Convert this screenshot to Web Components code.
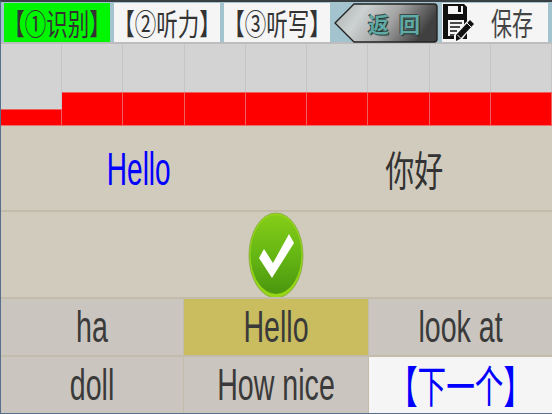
<!DOCTYPE html>
<html lang="zh">
<head>
<meta charset="utf-8">
<title>识别</title>
<style>
  html, body { margin: 0; padding: 0; }
  body { width: 552px; height: 414px; overflow: hidden; font-family: "Liberation Sans", "Noto Sans CJK SC", sans-serif; }
</style>
</head>
<body>
<quiz-app>
  <top-bar slot="top">
    <tab-button active>【①识别】</tab-button>
    <tab-button>【②听力】</tab-button>
    <tab-button>【③听写】</tab-button>
    <back-button></back-button>
    <save-button></save-button>
  </top-bar>
  <score-bars slot="bars"></score-bars>
  <word-row slot="word"></word-row>
  <result-row slot="result"></result-row>
  <choice-grid slot="choices">
    <choice-button>ha</choice-button>
    <choice-button state="correct">Hello</choice-button>
    <choice-button>look at</choice-button>
    <choice-button>doll</choice-button>
    <choice-button>How nice</choice-button>
    <choice-button state="next">【下一个】</choice-button>
  </choice-grid>
</quiz-app>

<script>
// the app was stretched to fit the screen, so all text is tall and narrow: scaleY on a narrow font size
class QuizApp extends HTMLElement {
    constructor() {
        super();
        this.attachShadow({ mode: 'open' });
        this.shadowRoot.innerHTML = `
            <style>
                :host {
                    display: flex;
                    flex-direction: column;
                    width: 552px;
                    height: 414px;
                    box-sizing: border-box;
                    background: #d1cbbd;
                    border-left: 1px solid #56708c;
                    border-top: 2px solid #3a3f44;
                    border-bottom: 1px solid #56708c;
                }
            </style>
            <slot name="top"></slot>
            <slot name="bars"></slot>
            <slot name="word"></slot>
            <slot name="result"></slot>
            <slot name="choices"></slot>
        `;
    }
}

class TopBar extends HTMLElement {
    constructor() {
        super();
        this.attachShadow({ mode: 'open' });
        this.shadowRoot.innerHTML = `
            <style>
                :host {
                    display: flex;
                    gap: 4px;
                    height: 42px;
                    box-sizing: border-box;
                    padding: 1px 4px 0 3px;
                    background: #a3c3cf;
                    border-bottom: 2px solid #bdbdbd;
                }
            </style>
            <slot></slot>
        `;
    }
}

class TabButton extends HTMLElement {
    constructor() {
        super();
        this.attachShadow({ mode: 'open' });
        this.shadowRoot.innerHTML = `
            <style>
                :host {
                    flex: 0 0 106px;
                    min-width: 0;
                    display: flex;
                    align-items: center;
                    justify-content: center;
                    background: #f5f5f5;
                    color: #333;
                    font-family: "Noto Sans CJK SC", sans-serif;
                    font-size: 21.5px;
                    line-height: 1;
                }
                :host([active]) { background: #00f500; }
                span {
                    display: inline-block;
                    white-space: nowrap;
                    transform: scaleY(1.36);
                }
            </style>
            <span><slot></slot></span>
        `;
    }
}

class BackButton extends HTMLElement {
    constructor() {
        super();
        this.attachShadow({ mode: 'open' });
        this.shadowRoot.innerHTML = `
            <style>
                :host {
                    flex: 0 0 104px;
                    min-width: 0;
                    position: relative;
                    display: flex;
                    align-items: center;
                    justify-content: center;
                    padding-left: 16px;
                    box-sizing: border-box;
                }
                svg { position: absolute; left: 0; top: 0; }
                span {
                    position: relative;
                    font-family: "Noto Sans CJK SC", sans-serif;
                    font-weight: 700;
                    font-size: 21px;
                    color: #62aaa6;
                    letter-spacing: 10px;
                    margin-right: -10px;
                    text-shadow: 1px 1px 1px #14302e, -1px -1px 0 #3a4a4a;
                    white-space: nowrap;
                }
            </style>
            <svg width="104" height="40" viewBox="0 0 104 40">
                <defs>
                    <linearGradient id="metal" x1="0" y1="0" x2="1" y2="0.25">
                        <stop offset="0" stop-color="#a9b1b2"/>
                        <stop offset="0.3" stop-color="#cdd1d1"/>
                        <stop offset="0.62" stop-color="#a4a4a4"/>
                        <stop offset="1" stop-color="#404040"/>
                    </linearGradient>
                </defs>
                <path d="M1 20 L20 1 H100 Q103 1 103 4 V36 Q103 39 100 39 H20 Z" fill="url(#metal)" stroke="#222" stroke-width="1.4" stroke-linejoin="round"/>
            </svg>
            <span>返回</span>
        `;
    }
}

class SaveButton extends HTMLElement {
    constructor() {
        super();
        this.attachShadow({ mode: 'open' });
        this.shadowRoot.innerHTML = `
            <style>
                :host {
                    flex: 1;
                    min-width: 0;
                    display: flex;
                    align-items: center;
                    background: #f5f5f5;
                    color: #444;
                    font-family: "Noto Sans CJK SC", sans-serif;
                    font-size: 21px;
                    line-height: 1;
                }
                svg { flex: none; margin-left: 1px; }
                span {
                    display: inline-block;
                    white-space: nowrap;
                    margin: 0 0 1px 16px;
                    transform: scaleY(1.44);
                }
            </style>
            <svg width="32" height="39" viewBox="0 0 32 39">
                <path d="M0 1 H21 L24 4 V36 H0 Z" fill="#111"/>
                <rect x="5" y="3" width="15" height="8" fill="#f5f5f5"/>
                <rect x="15" y="3" width="3" height="6" fill="#111"/>
                <rect x="5" y="17" width="16" height="16" fill="#f5f5f5"/>
                <path d="M7 20 H19 M7 24 H17 M7 28 H14 M7 32 H12" stroke="#111" stroke-width="1.6"/>
                <path d="M27 15 L32 20 L17 39 H11 V32 Z" fill="#f5f5f5"/>
                <path d="M27 17 L31 21 L17 36 L13 38 L13 32 Z" fill="#111"/>
                <path d="M24 20 L28 24 M14.5 32 L17.5 35" stroke="#f5f5f5" stroke-width="1"/>
            </svg>
            <span>保存</span>
        `;
    }
}

class ScoreBars extends HTMLElement {
    constructor() {
        super();
        this.attachShadow({ mode: 'open' });
        const heights = [17, 34, 34, 34, 34, 34, 34, 34, 34];
        const cols = heights.map(h => `<div class="col"><div class="bar" style="height:${h}px"></div></div>`).join('');
        this.shadowRoot.innerHTML = `
            <style>
                :host {
                    display: grid;
                    grid-template-columns: repeat(9, 1fr);
                    height: 82px;
                    flex: none;
                    background: #d3d3d3;
                }
                .col {
                    display: flex;
                    flex-direction: column;
                    justify-content: flex-end;
                    border-right: 1px solid #c6c6c6;
                }
                .bar {
                    box-sizing: border-box;
                    margin-right: -1px;
                    background: #ff0000;
                    border-top: 1px solid #ee6060;
                    border-right: 1px solid #ee6060;
                    border-bottom: 1px solid #e87070;
                }
            </style>
            ${cols}
        `;
    }
}

class WordRow extends HTMLElement {
    constructor() {
        super();
        this.attachShadow({ mode: 'open' });
        this.shadowRoot.innerHTML = `
            <style>
                :host {
                    display: grid;
                    grid-template-columns: 1fr 1fr;
                    height: 86px;
                    flex: none;
                    box-sizing: border-box;
                    border-bottom: 2px solid #c3bcab;
                }
                div {
                    display: flex;
                    align-items: center;
                    justify-content: center;
                }
                span {
                    display: inline-block;
                    white-space: nowrap;
                    line-height: 1;
                }
                .en {
                    color: #0000ff;
                    font-family: "Liberation Sans", sans-serif;
                    font-size: 28px;
                    margin-top: 3px;
                    transform: scaleY(1.66);
                }
                .zh {
                    color: #333;
                    font-family: "Noto Sans CJK SC", sans-serif;
                    font-size: 29px;
                    transform: scaleY(1.42);
                }
            </style>
            <div><span class="en">Hello</span></div>
            <div><span class="zh">你好</span></div>
        `;
    }
}

class ResultRow extends HTMLElement {
    constructor() {
        super();
        this.attachShadow({ mode: 'open' });
        this.shadowRoot.innerHTML = `
            <style>
                :host {
                    display: flex;
                    align-items: center;
                    justify-content: center;
                    height: 85px;
                    flex: none;
                }
                svg { flex: none; margin: 1px 1px 0 0; }
            </style>
            <svg width="56" height="87" viewBox="0 0 56 87">
                <defs>
                    <linearGradient id="ball" x1="0" y1="0" x2="0" y2="1">
                        <stop offset="0" stop-color="#84cc17"/>
                        <stop offset="0.5" stop-color="#66b714"/>
                        <stop offset="1" stop-color="#4b960f"/>
                    </linearGradient>
                </defs>
                <ellipse cx="28" cy="43.5" rx="27" ry="42.5" fill="#96d616" stroke="#7da83a" stroke-width="0.8"/>
                <ellipse cx="28" cy="42.5" rx="25.5" ry="39.5" fill="url(#ball)"/>
                <path d="M11 46 L16 37 L25 51 L41 22 L46 31 L24 66 Z" fill="#fff"/>
            </svg>
        `;
    }
}

class ChoiceGrid extends HTMLElement {
    constructor() {
        super();
        this.attachShadow({ mode: 'open' });
        this.shadowRoot.innerHTML = `
            <style>
                :host {
                    display: grid;
                    grid-template-columns: 182px 1fr 183px;
                    grid-template-rows: 56px 56px;
                    gap: 2px 1px;
                    flex: none;
                    background: #c3bcab;
                    padding-top: 2px;
                }
            </style>
            <slot></slot>
        `;
    }
}

class ChoiceButton extends HTMLElement {
    constructor() {
        super();
        this.attachShadow({ mode: 'open' });
        this.shadowRoot.innerHTML = `
            <style>
                :host {
                    display: flex;
                    align-items: center;
                    justify-content: center;
                    background: #cac6bf;
                    color: #3a3a3a;
                    font-family: "Liberation Sans", sans-serif;
                    font-size: 28.6px;
                    line-height: 1;
                }
                :host([state="correct"]) { background: #c9bd60; }
                :host([state="next"]) {
                    background: #f5f5f5;
                    color: #0000ff;
                    font-family: "Noto Sans CJK SC", sans-serif;
                }
                span {
                    display: inline-block;
                    white-space: nowrap;
                    transform: scaleY(1.54);
                }
            </style>
            <span><slot></slot></span>
        `;
    }
}

customElements.define('quiz-app', QuizApp);
customElements.define('top-bar', TopBar);
customElements.define('tab-button', TabButton);
customElements.define('back-button', BackButton);
customElements.define('save-button', SaveButton);
customElements.define('score-bars', ScoreBars);
customElements.define('word-row', WordRow);
customElements.define('result-row', ResultRow);
customElements.define('choice-grid', ChoiceGrid);
customElements.define('choice-button', ChoiceButton);
</script>
</body>
</html>
